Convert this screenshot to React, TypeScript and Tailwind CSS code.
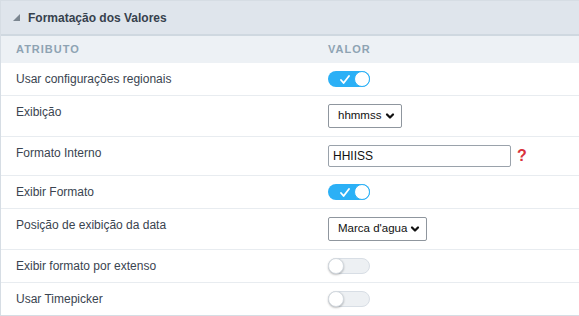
import { ChevronDown } from "lucide-react";

function Toggle({ on }: { on: boolean }) {
  if (on) {
    return (
      <div className="relative h-[16px] w-[42px] rounded-full bg-[#2bb0f6]">
        <svg
          className="absolute left-[12px] top-[4px]"
          width="10"
          height="9"
          viewBox="0 0 10 9"
          fill="none"
        >
          <path d="M1 5l2.6 3L9 1" stroke="white" strokeWidth="1.8" strokeLinecap="round" strokeLinejoin="round" />
        </svg>
        <div className="absolute right-0 top-0 h-[16px] w-[16px] rounded-full border border-[#2bb0f6] bg-white" />
      </div>
    );
  }
  return (
    <div className="relative h-[16px] w-[42px] rounded-full border border-[#d8dee5] bg-[#edf0f3]">
      <div className="absolute -left-px -top-px h-[16px] w-[16px] rounded-full border border-[#d3d9df] bg-white shadow-[0_1px_2px_rgba(0,0,0,0.25)]" />
    </div>
  );
}

function Select({ value, width }: { value: string; width: string }) {
  return (
    <div
      className={`flex h-[24px] items-center justify-between whitespace-nowrap rounded-[2px] border border-[#8f969e] bg-white pl-[9px] pr-[5px] text-[11.5px] text-[#111] ${width}`}
    >
      <span>{value}</span>
      <ChevronDown size={12} strokeWidth={4.5} className="text-[#111]" />
    </div>
  );
}

const rows: { label: string; value: React.ReactNode }[] = [
  { label: "Usar configurações regionais", value: <Toggle on /> },
  { label: "Exibição", value: <Select value="hhmmss" width="w-[74px]" /> },
  {
    label: "Formato Interno",
    value: (
      <div className="flex items-center gap-[6px]">
        <div className="flex h-[22px] w-[183px] items-center rounded-[2px] border border-[#9aa2ab] bg-white px-[4px] text-[12px] text-[#111]">
          HHIISS
        </div>
        <span className="text-[16px] font-bold leading-none text-[#d9313b]">?</span>
      </div>
    ),
  },
  { label: "Exibir Formato", value: <Toggle on /> },
  { label: "Posição de exibição da data", value: <Select value="Marca d'agua" width="w-[99px]" /> },
  { label: "Exibir formato por extenso", value: <Toggle on={false} /> },
  { label: "Usar Timepicker", value: <Toggle on={false} /> },
];

export default function App() {
  return (
    <div className="h-[316px] w-[579px] bg-white font-['Liberation_Sans',Arial,sans-serif]">
      <div className="border-l border-t border-[#d6dde4]">
        <div className="flex h-[35px] items-center gap-[8px] border-b-2 border-[#cfd8e0] bg-[#dfe5ec] pl-[12px]">
          <svg width="7" height="7" viewBox="0 0 7 7">
            <path d="M7 0V7H0Z" fill="#7b8690" />
          </svg>
          <span className="text-[12px] font-bold text-[#36414d]">Formatação dos Valores</span>
        </div>
        <div className="flex h-[27px] items-center bg-[#edf1f5] text-[11px] font-bold tracking-[1px] text-[#8ea3b3]">
          <div className="w-[311px] pl-[15px]">ATRIBUTO</div>
          <div className="pl-[16px]">VALOR</div>
        </div>
        {rows.map((r, i) => (
          <div
            key={r.label}
            className={`flex py-[8px] ${i < rows.length - 1 ? "border-b border-[#e8ecf0]" : "border-b border-[#d6dde4]"}`}
          >
            <div className="w-[311px] pl-[15px] pt-[1px] text-[12px] leading-[15px] text-[#3a4450]">{r.label}</div>
            <div className="pl-[16px]">{r.value}</div>
          </div>
        ))}
      </div>
    </div>
  );
}
